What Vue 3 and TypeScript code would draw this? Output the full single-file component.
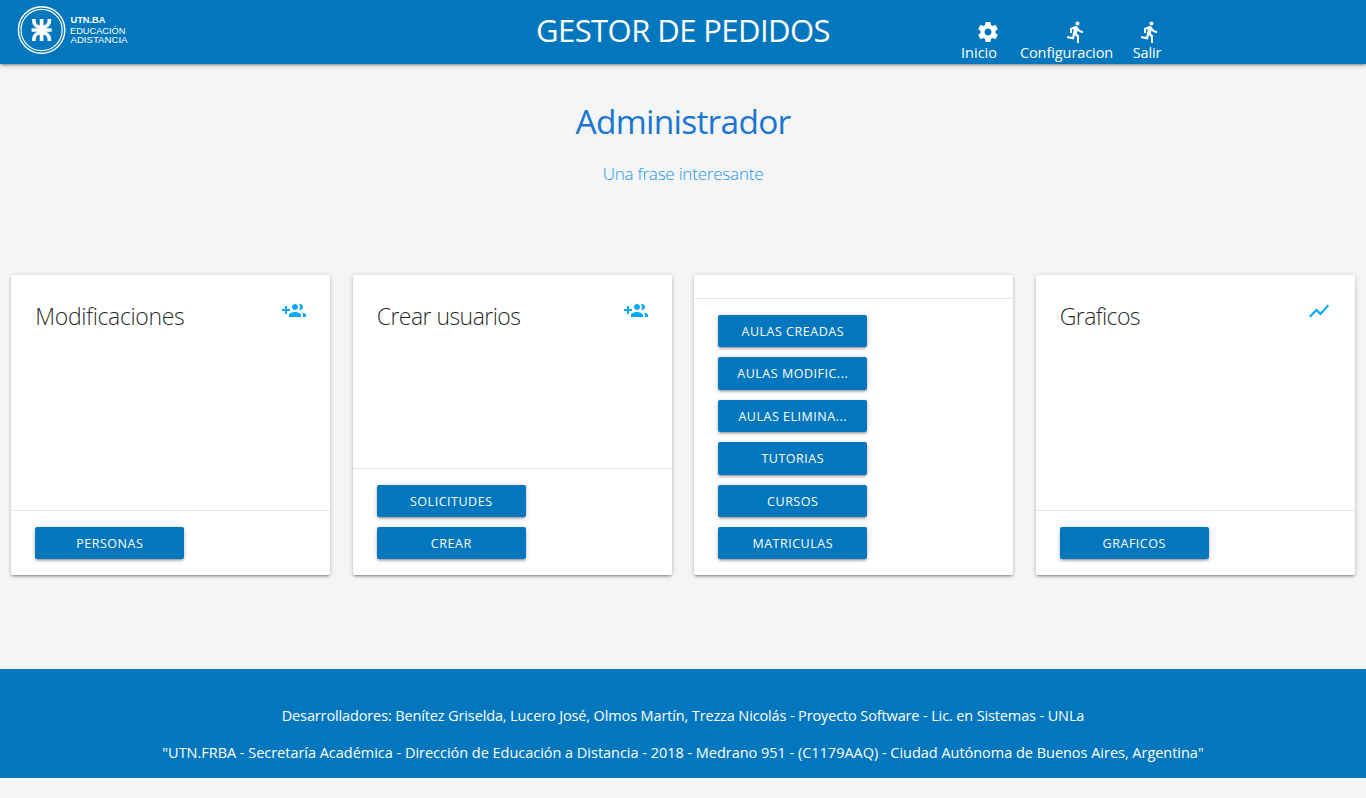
<script setup lang="ts">
interface NavItem {
  label: string
  icon: string
  key: string
}

interface Card {
  key: string
  title?: string
  icon?: string
  actions: { label: string; key: string }[]
}

const icons = {
  settings:
    'M19.43 12.98c.04-.32.07-.64.07-.98s-.03-.66-.07-.98l2.11-1.65c.19-.15.24-.42.12-.64l-2-3.46c-.12-.22-.39-.3-.61-.22l-2.49 1c-.52-.4-1.08-.73-1.69-.98l-.38-2.65C14.46 2.18 14.25 2 14 2h-4c-.25 0-.46.18-.49.42l-.38 2.65c-.61.25-1.17.59-1.69.98l-2.49-1c-.23-.09-.49 0-.61.22l-2 3.46c-.13.22-.07.49.12.64l2.11 1.65c-.04.32-.07.65-.07.98s.03.66.07.98l-2.11 1.65c-.19.15-.24.42-.12.64l2 3.46c.12.22.39.3.61.22l2.49-1c.52.4 1.08.73 1.69.98l.38 2.65c.03.24.24.42.49.42h4c.25 0 .46-.18.49-.42l.38-2.65c.61-.25 1.17-.59 1.69-.98l2.49 1c.23.09.49 0 .61-.22l2-3.46c.12-.22.07-.49-.12-.64l-2.11-1.65zM12 15.5c-1.93 0-3.5-1.57-3.5-3.5s1.57-3.5 3.5-3.5 3.5 1.57 3.5 3.5-1.57 3.5-3.5 3.5z',
  run:
    'M13.49 5.48c1.1 0 2-.9 2-2s-.9-2-2-2-2 .9-2 2 .9 2 2 2zm-3.6 13.9l1-4.4 2.1 2v6h2v-7.5l-2.1-2 .6-3c1.3 1.5 3.3 2.5 5.5 2.5v-2c-1.9 0-3.5-1-4.3-2.4l-1-1.6c-.4-.6-1-1-1.7-1-.3 0-.5.1-.8.1l-5.2 2.2v4.7h2v-3.4l1.8-.7-1.6 8.1-4.9-1-.4 2 7 1.4z',
  groupAdd:
    'M8 10H5V7H3v3H0v2h3v3h2v-3h3v-2zm10 1c1.66 0 2.99-1.34 2.99-3S19.66 5 18 5c-.32 0-.63.05-.91.14.57.81.9 1.79.9 2.86s-.34 2.04-.9 2.86c.28.09.59.14.91.14zm-5 0c1.66 0 2.99-1.34 2.99-3S14.66 5 13 5c-1.66 0-3 1.34-3 3s1.34 3 3 3zm6.62 2.16c.83.73 1.38 1.66 1.38 2.84v2h3v-2c0-1.54-2.37-2.49-4.38-2.84zM13 13c-2 0-6 1-6 3v2h12v-2c0-2-4-3-6-3z',
  chart: 'M3.5 18.49l6-6.01 4 4L22 6.92l-1.41-1.41-7.09 7.97-4-4L2 16.99z',
}

const nav: NavItem[] = [
  { label: 'Inicio', icon: icons.settings, key: 'inicio' },
  { label: 'Configuracion', icon: icons.run, key: 'config' },
  { label: 'Salir', icon: icons.run, key: 'salir' },
]

const cards: Card[] = [
  {
    key: 'modificaciones',
    title: 'Modificaciones',
    icon: icons.groupAdd,
    actions: [{ label: 'PERSONAS', key: 'personas' }],
  },
  {
    key: 'usuarios',
    title: 'Crear usuarios',
    icon: icons.groupAdd,
    actions: [
      { label: 'SOLICITUDES', key: 'solicitudes' },
      { label: 'CREAR', key: 'crear' },
    ],
  },
  {
    key: 'aulas',
    actions: [
      { label: 'AULAS CREADAS', key: 'creadas' },
      { label: 'AULAS MODIFIC...', key: 'modific' },
      { label: 'AULAS ELIMINA...', key: 'elimina' },
      { label: 'TUTORIAS', key: 'tutorias' },
      { label: 'CURSOS', key: 'cursos' },
      { label: 'MATRICULAS', key: 'matriculas' },
    ],
  },
  {
    key: 'graficos',
    title: 'Graficos',
    icon: icons.chart,
    actions: [{ label: 'GRAFICOS', key: 'graficos' }],
  },
]
</script>

<template>
  <div class="page">
    <header class="header">
      <svg class="logo" viewBox="0 0 140 64" width="140" height="64">
        <g fill="none" stroke="#fff">
          <circle cx="41.6" cy="30" r="23.2" stroke-width="1.4" />
          <circle cx="41.6" cy="30" r="20.6" stroke-width="1.2" />
          <g stroke-width="3.7">
            <path d="M41.6 19v22M31.6 30h20" />
            <path d="M33.8 19v1.5c0 4 3 6.8 7.8 6.8s7.8-2.8 7.8-6.8V19" />
            <path d="M33.8 41v-1.5c0-4 3-6.8 7.8-6.8s7.8 2.8 7.8 6.8V41" />
          </g>
        </g>
        <g class="logo-text" fill="#fff">
          <text class="brand" x="70.5" y="22.8" textLength="35" lengthAdjust="spacingAndGlyphs">UTN.BA</text>
          <text x="70" y="33.9" textLength="55.5" lengthAdjust="spacingAndGlyphs">EDUCACIÓN</text>
          <text x="70.5" y="43.4" textLength="57" lengthAdjust="spacingAndGlyphs">ADISTANCIA</text>
        </g>
      </svg>
      <h1 class="title">GESTOR DE PEDIDOS</h1>
      <nav class="nav">
        <a v-for="item in nav" :key="item.key" class="nav-item" :class="item.key">
          <svg class="icon" viewBox="0 0 24 24"><path :d="item.icon" /></svg>
          <span>{{ item.label }}</span>
        </a>
      </nav>
    </header>

    <main class="main">
      <h2 class="heading">Administrador</h2>
      <p class="tagline">Una frase interesante</p>

      <section class="cards">
        <article v-for="card in cards" :key="card.key" class="card">
          <div class="card-content">
            <template v-if="card.title">
              <span class="card-title" :class="'t-' + card.key">{{ card.title }}</span>
              <svg class="icon" viewBox="0 0 24 24"><path :d="card.icon" /></svg>
            </template>
          </div>
          <div class="card-action">
            <button v-for="action in card.actions" :key="action.key" class="btn">{{ action.label }}</button>
          </div>
        </article>
      </section>
    </main>

    <footer class="footer">
      <p class="team">Desarrolladores: Benítez Griselda, Lucero José, Olmos Martín, Trezza Nicolás - Proyecto Software - Lic. en Sistemas - UNLa</p>
      <p class="address">"UTN.FRBA - Secretaría Académica - Dirección de Educación a Distancia - 2018 - Medrano 951 - (C1179AAQ) - Ciudad Autónoma de Buenos Aires, Argentina"</p>
    </footer>
  </div>
</template>

<style>
body {
  background: #f5f5f5;
}
</style>

<style scoped>
.page {
  height: 798px;
  display: flex;
  flex-direction: column;
  overflow: hidden;
  font-family: "Segoe UI", "Open Sans", "Noto Sans", sans-serif;
  font-size: 14.5px;
  background: #f5f5f5;
}
.header {
  flex: none;
  height: 64px;
  display: grid;
  grid-template-columns: 400px 566px 400px;
  background: #0277bd;
  color: #fff;
  box-shadow: 0 2px 2px 0 rgba(0, 0, 0, .14), 0 3px 1px -2px rgba(0, 0, 0, .12), 0 1px 5px 0 rgba(0, 0, 0, .2);
}
.logo {
  display: block;
}
.logo-text {
  font: 9px "Liberation Sans", sans-serif;
}
.brand {
  font-weight: 700;
  font-size: 8.4px;
}
.title {
  margin: 0;
  text-align: center;
  font-size: 31px;
  font-weight: 400;
  line-height: 60px;
  letter-spacing: -.57px;
}
.nav {
  display: flex;
  align-items: flex-start;
  padding-top: 20px;
  margin-left: -5px;
}
.nav-item {
  display: flex;
  flex-direction: column;
  align-items: center;
  line-height: 20px;
  white-space: nowrap;
}
.icon {
  display: block;
  flex: none;
  width: 24px;
  height: 24px;
  fill: currentColor;
}
.nav-item span {
  margin-top: -1px;
}
.nav-item .icon {
  margin-left: 18px;
}
.inicio {
  width: 36px;
}
.config {
  width: 93px;
  margin-left: 23px;
  letter-spacing: -.08px;
}
.salir {
  width: 28px;
  margin-left: 20px;
  letter-spacing: -.1px;
}
.nav-item.salir .icon {
  margin-left: 5px;
}
.main {
  flex: none;
  height: 605px;
  text-align: center;
}
.heading {
  margin: 33px 0 0;
  font-size: 33.5px;
  font-weight: 400;
  line-height: 48px;
  letter-spacing: -.74px;
  color: #1976d2;
}
.tagline {
  margin: 17px 0 0;
  font-size: 17px;
  font-weight: 350;
  line-height: 24px;
  letter-spacing: -.2px;
  color: #2196f3;
}
.cards {
  display: grid;
  grid-template-columns: repeat(4, 1fr);
  gap: 22.5px;
  margin-top: 89.4px;
  padding: 0 11.25px;
}
.card {
  display: flex;
  flex-direction: column;
  box-sizing: border-box;
  height: 300px;
  background: #fff;
  border-radius: 2px;
  box-shadow: 0 2px 2px 0 rgba(0, 0, 0, .14), 0 3px 1px -2px rgba(0, 0, 0, .12), 0 1px 5px 0 rgba(0, 0, 0, .2);
}
.card-content {
  flex: 1;
  min-height: 0;
  display: flex;
  justify-content: space-between;
  align-items: flex-start;
  padding: 24px 24px 0;
  box-sizing: border-box;
  color: #03a9f4;
}
.card:nth-child(3) .card-content {
  padding-top: 0;
}
.card-title {
  margin-top: 1px;
  font-size: 23px;
  font-weight: 300;
  line-height: 32px;
  color: rgba(0, 0, 0, .87);
}
.t-modificaciones {
  letter-spacing: -.35px;
}
.t-usuarios {
  letter-spacing: -.55px;
}
.t-graficos {
  letter-spacing: -.6px;
}
.card-action {
  flex: none;
  display: flex;
  flex-direction: column;
  align-items: flex-start;
  gap: 10px;
  padding: 16px 24px;
  border-top: 1px solid rgba(160, 160, 160, .25);
}
.btn {
  width: 149px;
  height: 32.4px;
  padding: 1px 0 0;
  border: 0;
  border-radius: 2px;
  background: #0277bd;
  color: #fff;
  font-family: inherit;
  font-size: 12.5px;
  line-height: 31.4px;
  letter-spacing: .52px;
  white-space: nowrap;
  box-shadow: 0 2px 2px 0 rgba(0, 0, 0, .14), 0 3px 1px -2px rgba(0, 0, 0, .12), 0 1px 5px 0 rgba(0, 0, 0, .2);
}
.footer {
  flex: none;
  height: 109px;
  box-sizing: border-box;
  padding-top: 36px;
  background: #0277bd;
  color: #fff;
  text-align: center;
}
.footer p {
  margin: 0 0 15px;
  line-height: 22px;
  white-space: nowrap;
}
.team {
  letter-spacing: -.13px;
}
.address {
  letter-spacing: -.025px;
}
</style>
